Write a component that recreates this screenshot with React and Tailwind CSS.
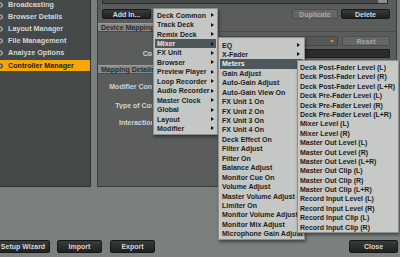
const sidebarItems = [
  "Broadcasting",
  "Browser Details",
  "Layout Manager",
  "File Management",
  "Analyze Options",
  "Controller Manager",
];

const mainMenu = [
  "Deck Common",
  "Track Deck",
  "Remix Deck",
  "Mixer",
  "FX Unit",
  "Browser",
  "Preview Player",
  "Loop Recorder",
  "Audio Recorder",
  "Master Clock",
  "Global",
  "Layout",
  "Modifier",
];

const mixerMenu = [
  ["EQ", true],
  ["X-Fader", true],
  ["Meters", true],
  ["Gain Adjust"],
  ["Auto-Gain Adjust"],
  ["Auto-Gain View On"],
  ["FX Unit 1 On"],
  ["FX Unit 2 On"],
  ["FX Unit 3 On"],
  ["FX Unit 4 On"],
  ["Deck Effect On"],
  ["Filter Adjust"],
  ["Filter On"],
  ["Balance Adjust"],
  ["Monitor Cue On"],
  ["Volume Adjust"],
  ["Master Volume Adjust"],
  ["Limiter On"],
  ["Monitor Volume Adjust"],
  ["Monitor Mix Adjust"],
  ["Microphone Gain Adjust"],
];

const metersMenu = [
  "Deck Post-Fader Level (L)",
  "Deck Post-Fader Level (R)",
  "Deck Post-Fader Level (L+R)",
  "Deck Pre-Fader Level (L)",
  "Deck Pre-Fader Level (R)",
  "Deck Pre-Fader Level (L+R)",
  "Mixer Level (L)",
  "Mixer Level (R)",
  "Master Out Level (L)",
  "Master Out Level (R)",
  "Master Out Level (L+R)",
  "Master Out Clip (L)",
  "Master Out Clip (R)",
  "Master Out Clip (L+R)",
  "Record Input Level (L)",
  "Record Input Level (R)",
  "Record Input Clip (L)",
  "Record Input Clip (R)",
];

function Arrow() {
  return <span className="ml-auto h-0 w-0 shrink-0 border-y-[2.5px] border-l-[3px] border-y-transparent border-l-[#111]" />;
}

function DarkButton({ children, className = "" }) {
  return (
    <div
      className={
        "flex items-center justify-center rounded-[2px] border border-[#161717] bg-gradient-to-b from-[#3a3b3b] to-[#1f2020] text-[#d6d8d7] " +
        className
      }
    >
      {children}
    </div>
  );
}

function GrayButton({ children, className = "" }) {
  return (
    <div
      className={
        "flex items-center justify-center rounded-[2px] border border-[#4c4e4d] bg-[#656766] text-[#a4a6a5] " + className
      }
    >
      {children}
    </div>
  );
}

function Band({ children }) {
  return (
    <div className="flex h-[9px] border-b border-[#4a4c4b]">
      <div className="flex w-[80px] items-center border-t border-[#9a9d9c] bg-[#878a89] pl-[3px] text-[#2a2c2b]">
        {children}
      </div>
    </div>
  );
}

// labels sit right-aligned at x=176, but the open menu covers everything past x=153
function Label({ children }) {
  return (
    <div className="w-[54px] shrink-0 overflow-hidden">
      <div className="w-[77px] whitespace-nowrap text-right text-[#d2d4d3]">{children}</div>
    </div>
  );
}

function LabelRow({ label, className = "" }) {
  return (
    <div className={"flex h-[10px] items-center " + className}>
      <Label>{label}</Label>
    </div>
  );
}

export default function App() {
  return (
    <div className="relative h-[257px] w-[400px] overflow-hidden bg-[#7b7f7e] font-['Liberation_Sans',Arial,sans-serif] text-[7px] font-bold leading-none">
      <div className="flex h-[187px]">
        {/* sidebar */}
        <div className="w-[91px] border-r border-b border-[#2f3131] bg-[#46494a]">
          <div className="-mt-[1px] flex flex-col">
            {sidebarItems.map((item, i) => {
              const active = i === sidebarItems.length - 1;
              return (
                <div
                  key={item}
                  className={
                    "relative flex items-center pl-[8px] text-[7.2px] " +
                    (active ? "mt-[1px] h-[11px] bg-[#f6a800] text-[#222]" : "h-[12px] text-[#d5d7d6]")
                  }
                >
                  <span
                    className={
                      "absolute left-[-2px] top-1/2 h-[5px] w-[5px] -translate-y-1/2 rounded-full border " +
                      (active ? "border-[#333] bg-[#9a9a9a]" : "border-[#bfc1c0] bg-[#5a5d5e]")
                    }
                  />
                  {item}
                </div>
              );
            })}
          </div>
        </div>

        {/* main panel */}
        <div className="ml-[6px] mr-[3px] flex flex-1 flex-col border-x border-b border-[#3a3c3c] bg-[#5b5d5c]">
          <div className="ml-[4px] mr-[8px] flex h-[4px] border-x border-b border-[#2a2b2b] bg-[#474a4a]">
            <div className="ml-auto w-[9px] bg-[#8b8d8c]" />
          </div>

          <div className="mt-[5px] flex h-[10px] items-stretch">
            <DarkButton className="ml-[4px] w-[49px]">Add In...</DarkButton>
            <GrayButton className="ml-auto w-[46px]">Duplicate</GrayButton>
            <DarkButton className="ml-[3px] mr-[6px] w-[49px]">Delete</DarkButton>
          </div>

          <div className="mt-[4px]">
            <Band>Device Mapping</Band>
          </div>

          <div className="mt-[4px] flex h-[10px] items-stretch">
            <div className="w-[77px]" />
            <div className="ml-[4px] flex flex-1 items-center rounded-[1px] border border-[#454746] bg-[#565857] pr-[3px]">
              <span className="ml-auto h-0 w-0 border-x-[2.5px] border-t-[3px] border-x-transparent border-t-[#e08a1a]" />
            </div>
            <GrayButton className="ml-[4px] mr-[6px] w-[48px]">Reset</GrayButton>
          </div>

          <div className="mt-[3px] flex h-[9px] items-center">
            <Label>Comment</Label>
            <div className="ml-[27px] mr-[6px] h-full flex-1 rounded-[1px] border border-[#1c1d1d] bg-[#2b2c2c]" />
          </div>

          <div className="mt-[7px]">
            <Band>Mapping Details</Band>
          </div>

          <LabelRow label="Modifier Conditions" className="mt-[7px]" />
          <LabelRow label="Type of Controller" className="mt-[9px]" />
          <LabelRow label="Interaction Mode" className="mt-[7px]" />
        </div>
      </div>

      {/* bottom buttons */}
      <div className="mt-[53px] flex h-[13px] items-stretch">
        <DarkButton className="ml-[-4px] w-[54px]">Setup Wizard</DarkButton>
        <DarkButton className="ml-[7px] w-[45px]">Import</DarkButton>
        <DarkButton className="ml-[8px] w-[45px]">Export</DarkButton>
        <DarkButton className="ml-auto mr-[2px] w-[49px]">Close</DarkButton>
      </div>

      {/* context menus */}
      <div className="absolute left-[153px] top-[8px] h-[127px] w-[65px] overflow-hidden border border-[#8e908f] bg-[#c5c7c5] pt-[1.5px] shadow-[1px_2px_3px_rgba(0,0,0,0.45)]">
        {mainMenu.map((item) => {
          const active = item === "Mixer";
          return (
            <div
              key={item}
              className={
                "mx-[1px] flex h-[9.45px] items-center whitespace-nowrap pl-[2px] pr-[2px] " +
                (active ? "bg-[#4e585a] text-[#e6e8e7]" : "text-[#1c1d1d]")
              }
            >
              {item}
              <Arrow />
            </div>
          );
        })}
      </div>

      <div className="absolute left-[218px] top-[37px] h-[203px] w-[87px] overflow-hidden border border-[#8e908f] bg-[#c5c7c5] pt-[2.3px] shadow-[1px_2px_3px_rgba(0,0,0,0.45)]">
        {mixerMenu.map(([item, sub]) => {
          const active = item === "Meters";
          return (
            <div
              key={item}
              className={
                "mx-[1px] flex h-[9.45px] items-center whitespace-nowrap pl-[2px] pr-[3px] " +
                (active ? "bg-[#4e585a] text-[#eeeeee]" : "text-[#1c1d1d]")
              }
            >
              {item}
              {sub && <Arrow />}
            </div>
          );
        })}
      </div>

      <div className="absolute left-[297px] top-[60px] h-[173px] w-[102px] overflow-hidden border border-[#8e908f] bg-[#c7c9c7] pt-[1.8px] shadow-[1px_2px_3px_rgba(0,0,0,0.45)]">
        {metersMenu.map((item) => (
          <div key={item} className="flex h-[9.4px] items-center whitespace-nowrap pl-[2px] text-[#1c1d1d]">
            {item}
          </div>
        ))}
      </div>
    </div>
  );
}
